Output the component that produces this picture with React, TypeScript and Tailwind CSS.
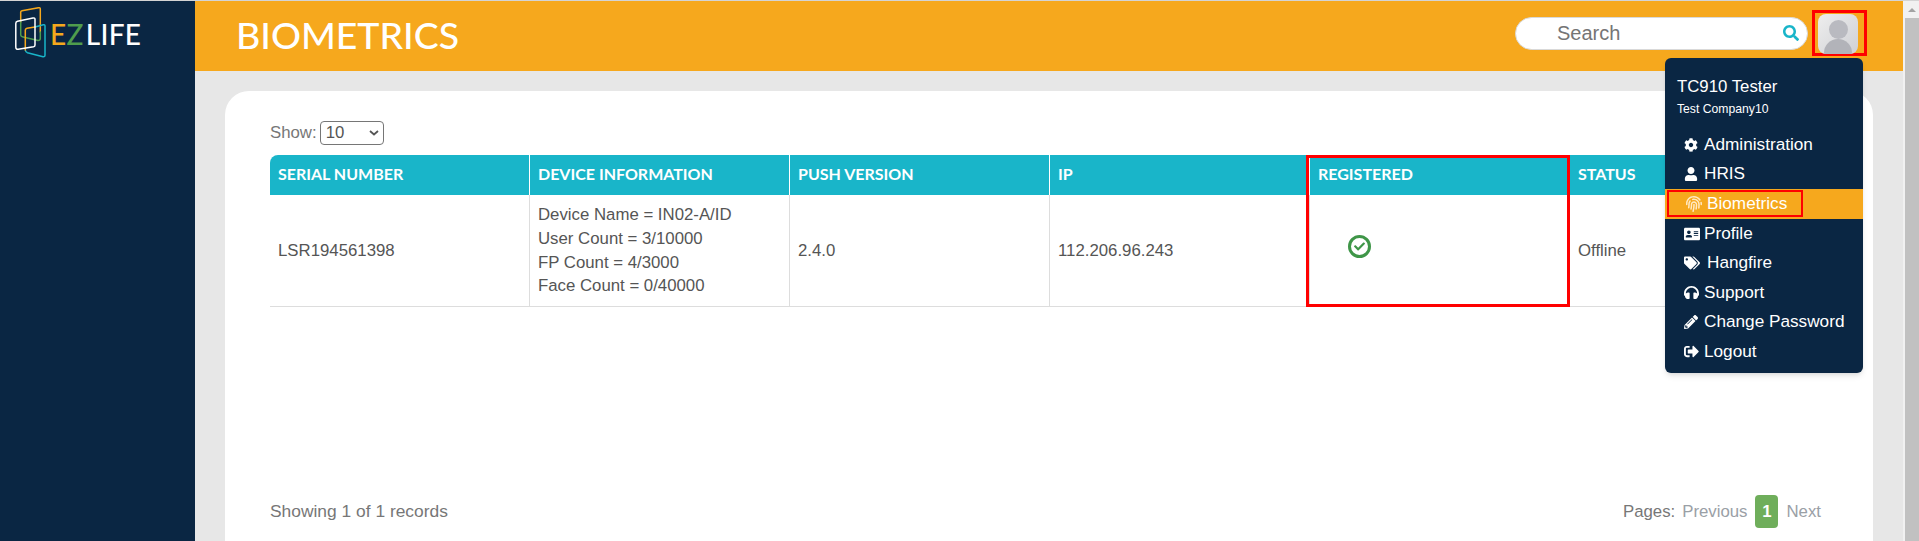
import { FaCog, FaUser, FaAddressCard, FaTags, FaHeadphones, FaPencilAlt, FaFingerprint, FaSignOutAlt, FaSearch, FaCheck } from "react-icons/fa";

const headers = ["SERIAL NUMBER", "DEVICE INFORMATION", "PUSH VERSION", "IP", "REGISTERED", "STATUS"];

const menu = [
  { label: "Administration", icon: <FaCog size={14} />, box: "w-[20px]" },
  { label: "HRIS", icon: <FaUser size={14} />, box: "w-[20px]" },
  { label: "Profile", icon: <FaAddressCard size={16} />, box: "w-[20px]" },
  { label: "Hangfire", icon: <FaTags size={16} />, box: "w-[23px]" },
  { label: "Support", icon: <FaHeadphones size={15} />, box: "w-[20px]" },
  { label: "Change Password", icon: <FaPencilAlt size={14} />, box: "w-[20px]" },
  { label: "Logout", icon: <FaSignOutAlt size={15} />, box: "w-[20px]" },
];

function Logo() {
  return (
    <div className="flex pl-[15px] pt-[6px]">
      <svg width="31" height="51" viewBox="0 0 31 51" fill="none" strokeWidth="1.5" strokeLinecap="round">
        <path d="M5.7 15V5Q5.7 4 7 3.7L23.5.7Q25.3.5 25.3 2V25" stroke="#f5a81d" />
        <path d="M5.7 15V28Q5.7 29.5 8 30L23 33.5Q25.3 33.5 25.3 31.5V25" stroke="#4f9d4d" />
        <path d="M20 20L28.3 17.8Q30 17.5 30 19V48Q30 50 28 49.7L12.5 45.7Q10.5 45 10.3 43" stroke="#19b5c9" />
        <path d="M10.3 43V23Q10.3 21.8 12 21.3L20 20" stroke="#f5a81d" />
        <path d="M2.5 14.3L18 10.9Q20 10.7 20 12.3V38Q20 39.5 18.5 39.8L3.3 42.3Q.8 42.5.8 40V16.5Q.8 14.8 2.5 14.3Z" stroke="#ffffff" />
      </svg>
      <div className="ml-[4px] mt-[11px] flex h-[32px] items-center font-['Lato',sans-serif] text-[28px] leading-none font-medium tracking-[0.3px]">
        <span className="text-[#f5a81d]">E</span>
        <span className="mr-[2px] text-[#4f9d4d]">Z</span>
        <span className="text-white">LIFE</span>
      </div>
    </div>
  );
}

function Avatar() {
  return (
    <div className="relative h-[40px] w-[40px] overflow-hidden rounded-[8px] bg-gradient-to-br from-[#eeeeee] to-[#cfd0d4]">
      <div className="absolute left-[11px] top-[6px] h-[19px] w-[19px] rounded-full bg-[#b9bac0]" />
      <div className="absolute left-[6px] top-[25px] h-[30px] w-[28px] rounded-full bg-[#b2b3b9]" />
    </div>
  );
}

export default function App() {
  return (
    <div className="flex h-[541px] w-[1919px] overflow-hidden border-t border-[#d4d4d4] bg-[#e7e7e7] font-['Liberation_Sans',sans-serif]">
      <aside className="h-full w-[195px] shrink-0 bg-[#0a2643]">
        <Logo />
      </aside>

      <main className="relative flex min-w-0 flex-1 flex-col">
        <header className="flex h-[70px] shrink-0 items-center bg-[#f6a81d] pl-[41px] pr-[36px]">
          <h1 className="pb-[3px] font-['Lato',sans-serif] text-[37.4px] leading-none font-medium text-white">BIOMETRICS</h1>
          <div className="ml-auto flex items-center gap-[4px] pb-[6px]">
            <div className="flex h-[33px] w-[293px] items-center justify-between rounded-full border border-[#d9d9d9] bg-white pl-[41px] pr-[8px]">
              <span className="text-[20px] text-[#757575]">Search</span>
              <FaSearch size={16} className="text-[#19b5c9]" />
            </div>
            <div className="h-[46px] border-[3px] border-[#ff0000] pl-[3px] pr-[6px] pt-[1px]">
              <Avatar />
            </div>
          </div>
        </header>

        <section className="mx-[30px] mt-[20px] flex flex-1 flex-col rounded-t-[24px] bg-white pl-[45px] pr-[30px]">
          <div className="mt-[29px] flex items-center gap-[3px] text-[16.8px] text-[#777777]">
            <span>Show:</span>
            <div className="flex h-[24px] w-[64px] items-center justify-between rounded-[4px] border border-[#767676] pl-[5px] pr-[4px] text-[#555555]">
              10
              <svg width="10" height="6" viewBox="0 0 10 6" fill="none" stroke="#555555" strokeWidth="1.8">
                <path d="M1 1l4 3.5L9 1" />
              </svg>
            </div>
          </div>

          <div className="mt-[10px] flex h-[40px] overflow-hidden rounded-tl-[8px] bg-[#19b5c9]">
            {headers.map((h) => (
              <div key={h} className="flex w-[260px] shrink-0 items-center border-r border-white pb-[2px] pl-[8px] font-['Lato',sans-serif] text-[16px] font-bold text-white">
                {h}
              </div>
            ))}
          </div>

          <div className="flex h-[112px] border-b border-[#dddddd] text-[16.8px] text-[#555555]">
            <div className="flex w-[260px] items-center border-r border-[#dddddd] pb-[1px] pl-[8px]">LSR194561398</div>
            <div className="flex w-[260px] flex-col justify-center border-r border-[#dddddd] pl-[8px] leading-[23.7px]">
              <span>Device Name = IN02-A/ID</span>
              <span>User Count = 3/10000</span>
              <span>FP Count = 4/3000</span>
              <span>Face Count = 0/40000</span>
            </div>
            <div className="flex w-[260px] items-center border-r border-[#dddddd] pb-[1px] pl-[8px]">2.4.0</div>
            <div className="flex w-[260px] items-center border-r border-[#dddddd] pb-[1px] pl-[8px]">112.206.96.243</div>
            <div className="flex w-[260px] items-center pb-[8px] pl-[38px]">
              <span className="flex h-[23px] w-[23px] items-center justify-center rounded-full border-[3px] border-[#3f9648]">
                <FaCheck size={11} className="text-[#3f9648]" />
              </span>
            </div>
            <div className="flex items-center pb-[1px] pl-[8px]">Offline</div>
          </div>

          <div className="mt-auto flex items-center justify-between pb-[13px] pr-[22px] text-[16.8px] text-[#777777]">
            <span className="text-[17.4px]">Showing 1 of 1 records</span>
            <div className="flex items-center">
              <span>Pages:</span>
              <span className="ml-[7px] text-[#9aa0a6]">Previous</span>
              <span className="mx-[8px] flex h-[33px] w-[23px] items-center justify-center rounded-[4px] bg-[#6fae5b] font-bold text-white">1</span>
              <span className="text-[#9aa0a6]">Next</span>
            </div>
          </div>
        </section>

        {/* red callout round the registered column */}
        <div className="pointer-events-none absolute left-[1111px] top-[154px] h-[152px] w-[264px] border-[3px] border-[#ff0000]" />

        {/* user dropdown */}
        <div className="absolute left-[1470px] top-[57px] h-[315px] w-[198px] rounded-[6px] bg-[#0a2643] pt-[18px] text-white shadow-md">
          <p className="pl-[12px] text-[16.8px] leading-[22px]">TC910 Tester</p>
          <p className="pl-[12px] pt-[1px] text-[12.2px] leading-[20px]">Test Company10</p>
          <ul className="mt-[11px] text-[17.2px]">
            {menu.slice(0, 2).map((m) => (
              <li key={m.label} className="flex h-[29.6px] items-center pl-[19px]">
                <span className={`${m.box} flex shrink-0 items-center`}>{m.icon}</span>
                {m.label}
              </li>
            ))}
            <li className="flex h-[29.6px] items-center bg-[#f6a81d] pl-[2px]">
              <div className="flex h-[27px] w-[136px] items-center border-[2px] border-[#ff0000] pl-[17px]">
                <span className="flex w-[21px] shrink-0 items-center">
                  <FaFingerprint size={16} className="text-[#ffe9c4]" />
                </span>
                Biometrics
              </div>
            </li>
            {menu.slice(2).map((m) => (
              <li key={m.label} className="flex h-[29.6px] items-center pl-[19px]">
                <span className={`${m.box} flex shrink-0 items-center`}>{m.icon}</span>
                {m.label}
              </li>
            ))}
          </ul>
        </div>
      </main>

      <div className="flex h-full w-[16px] shrink-0 flex-col bg-[#f1f1f1] pl-[2px]">
        <div className="flex h-[17px] items-center justify-center">
          <div className="h-0 w-0 border-x-[4px] border-b-[4px] border-x-transparent border-b-[#a3a3a3]" />
        </div>
        <div className="flex-1 bg-[#c1c1c1]" />
      </div>
    </div>
  );
}
